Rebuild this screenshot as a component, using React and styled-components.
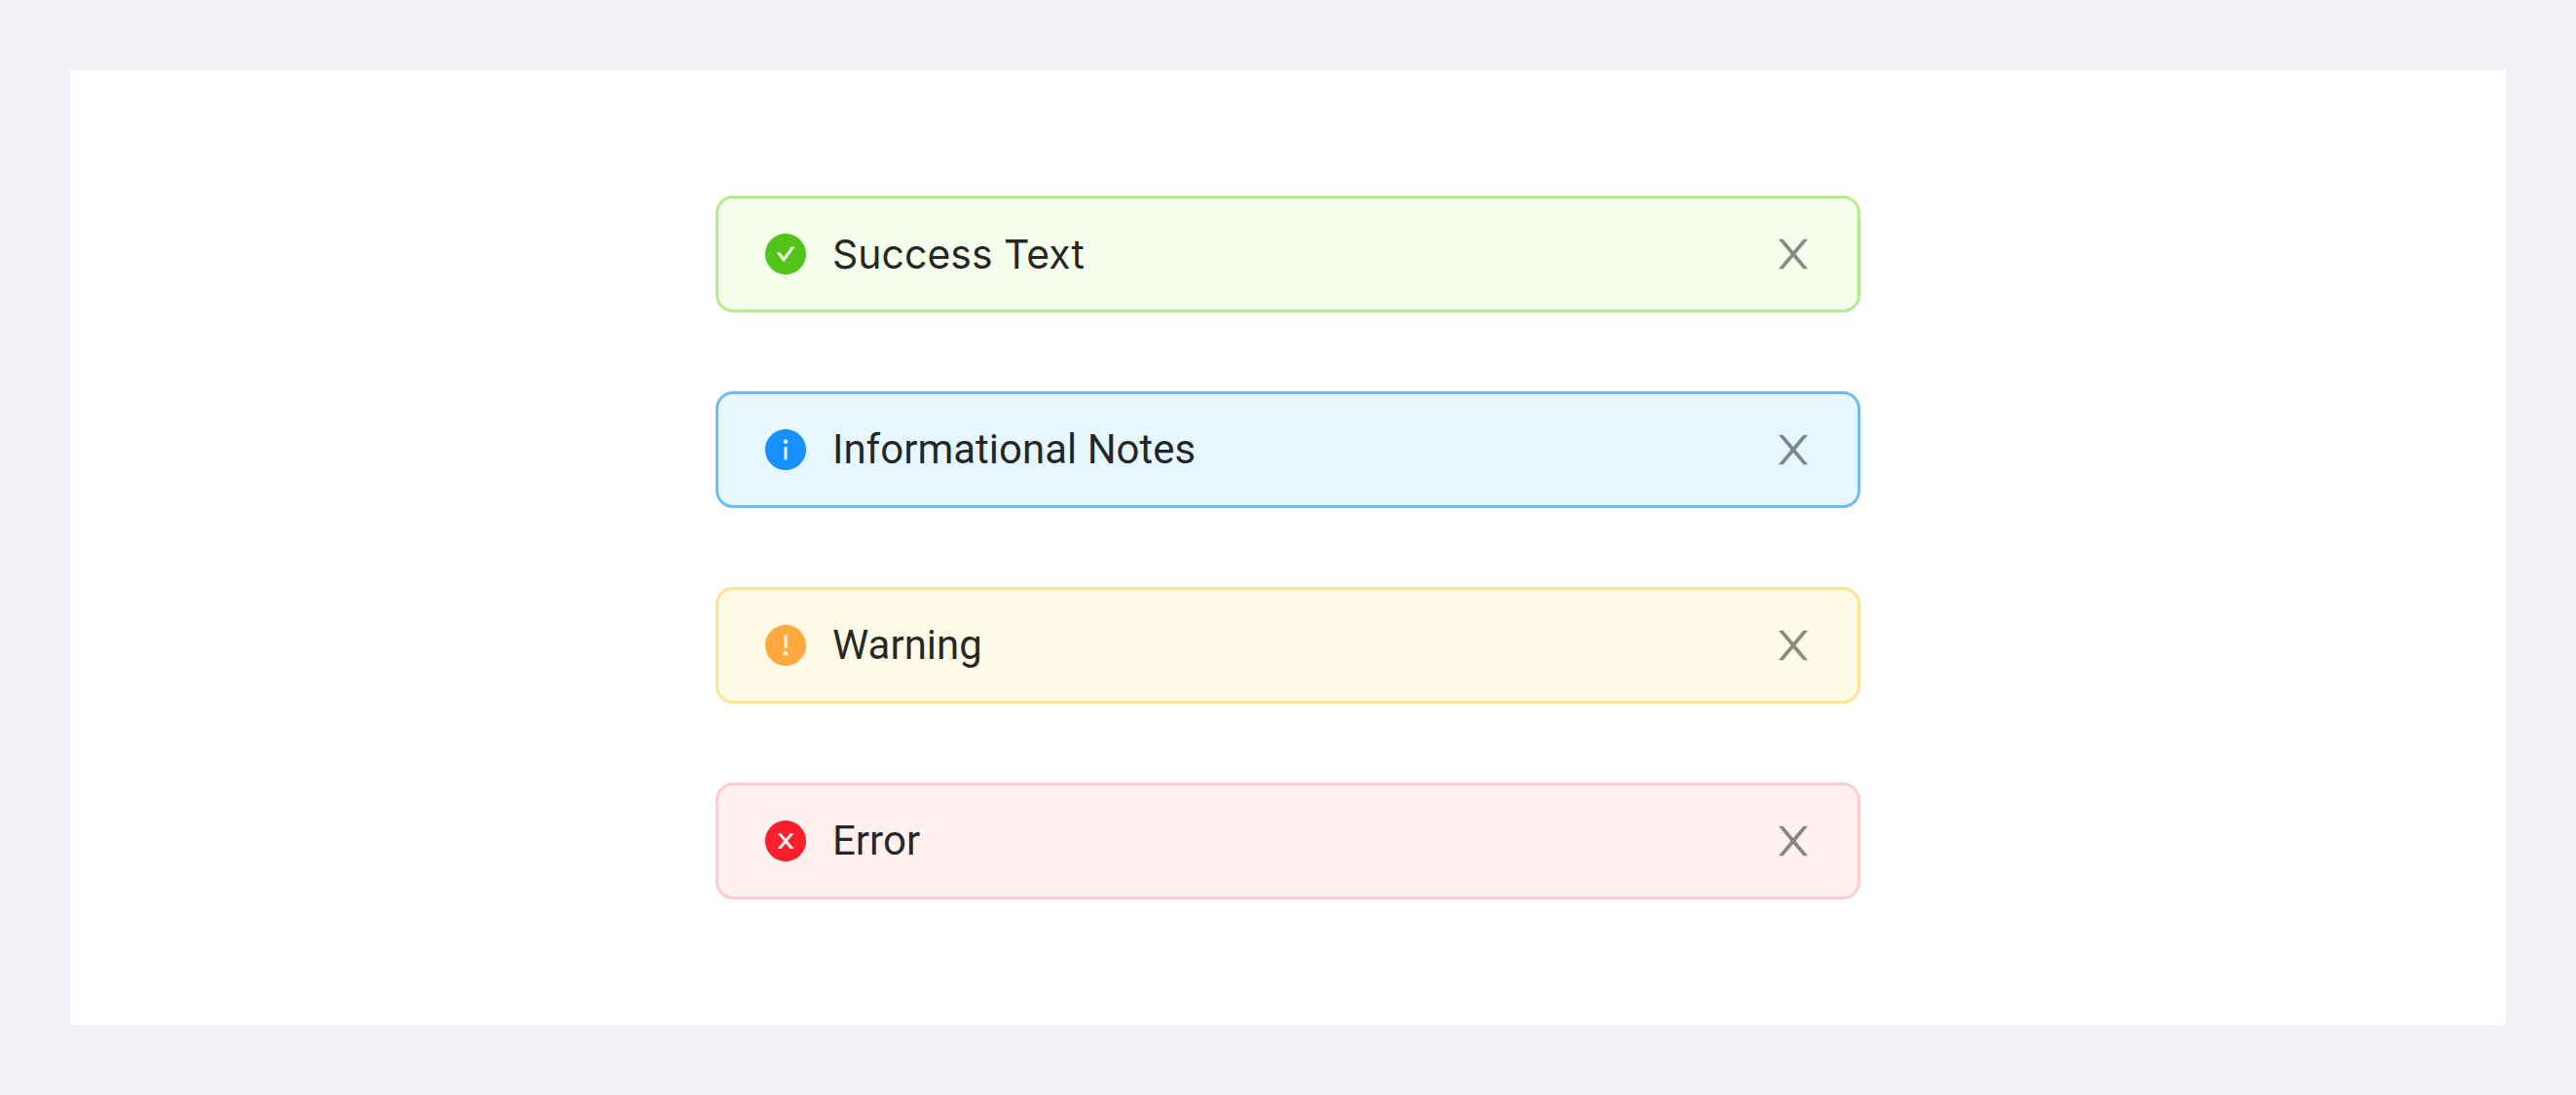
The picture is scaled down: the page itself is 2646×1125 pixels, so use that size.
import React, { useState } from "react";
import styled, { createGlobalStyle } from "styled-components";

const GlobalStyle = createGlobalStyle`
  *, *::before, *::after { box-sizing: border-box; }
  body {
    margin: 0;
    background: #f0f2f8;
    font-family: Roboto, "Noto Sans", sans-serif;
  }
`;

const Page = styled.div`
  min-height: 100vh;
  padding: 72px;
`;

const Panel = styled.main`
  display: flex;
  flex-direction: column;
  align-items: center;
  gap: 81px;
  padding: 129px 72px;
  background: #ffffff;
`;

const AlertBox = styled.div`
  display: flex;
  align-items: center;
  gap: 27px;
  width: 100%;
  max-width: 1176px;
  padding: 30px 48px;
  border: 3px solid ${(p) => p.$border};
  border-radius: 18px;
  background: ${(p) => p.$background};
`;

const StatusIcon = styled.svg`
  flex: none;
  width: 42px;
  height: 42px;
  fill: ${(p) => p.$color};
`;

const Message = styled.span`
  flex: 1;
  font-family: ${(p) => p.$font};
  font-size: ${(p) => p.$size}px;
  line-height: 54px;
  color: rgba(0, 0, 0, 0.85);
`;

const CloseButton = styled.button`
  display: flex;
  flex: none;
  padding: 0;
  border: 0;
  background: none;
  color: rgba(0, 0, 0, 0.45);
  cursor: pointer;

  &:hover { color: rgba(0, 0, 0, 0.75); }
`;

const CloseGlyph = styled.svg`
  width: 36px;
  height: 36px;
  fill: currentColor;
`;

const DISC =
  "M512 64C264.6 64 64 264.6 64 512s200.6 448 448 448 448-200.6 448-448S759.4 64 512 64z";

const ALERTS = [
  {
    id: "success",
    text: "Success Text",
    font: "Inter, sans-serif",
    size: 41,
    background: "#f6ffed",
    border: "#b7eb8f",
    color: "#52c41a",
    mark: "m193.5 301.7l-210.6 292a31.8 31.8 0 0 1-51.7 0L318.5 484.9c-3.8-5.3 0-12.7 6.5-12.7h46.9c10.2 0 19.9 4.9 25.9 13.3l71.2 98.8 157.2-218c6-8.3 15.6-13.3 25.9-13.3H699c6.5 0 10.3 7.4 6.5 12.7z",
  },
  {
    id: "info",
    text: "Informational Notes",
    background: "#e6f7ff",
    border: "#6fbcf5",
    color: "#1890ff",
    mark: "m32 664c0 4.4-3.6 8-8 8h-48c-4.4 0-8-3.6-8-8V456c0-4.4 3.6-8 8-8h48c4.4 0 8 3.6 8 8v272zm-32-344a48.01 48.01 0 0 1 0-96 48.01 48.01 0 0 1 0 96z",
  },
  {
    id: "warning",
    text: "Warning",
    background: "#fffae6",
    border: "#fbe493",
    color: "#ffa940",
    mark: "m-32 232c0-4.4 3.6-8 8-8h48c4.4 0 8 3.6 8 8v272c0 4.4-3.6 8-8 8h-48c-4.4 0-8-3.6-8-8V296zm32 440a48.01 48.01 0 0 1 0-96 48.01 48.01 0 0 1 0 96z",
  },
  {
    id: "error",
    text: "Error",
    background: "#fff1f0",
    border: "#fdcccb",
    color: "#f8202d",
    mark: "m165.4 618.2l-66-.3L512 563.4l-99.3 118.4-66.1.3c-4.4 0-8-3.5-8-8 0-1.9.7-3.7 1.9-5.2l130.1-155L340.5 359a8.32 8.32 0 0 1-1.9-5.2c0-4.4 3.6-8 8-8l66.1.3L512 464.6l99.3-118.4 66-.3c4.4 0 8 3.5 8 8 0 1.9-.7 3.7-1.9 5.2L553.5 514l130 155c1.2 1.5 1.9 3.3 1.9 5.2 0 4.4-3.6 8-8 8z",
  },
];

function Alert({ alert, onClose }) {
  return (
    <AlertBox role="alert" $background={alert.background} $border={alert.border}>
      <StatusIcon $color={alert.color} viewBox="64 64 896 896" aria-hidden="true">
        <path fillRule="evenodd" d={DISC + alert.mark} />
      </StatusIcon>
      <Message $font={alert.font || "inherit"} $size={alert.size || 42}>
        {alert.text}
      </Message>
      <CloseButton type="button" aria-label="Close" onClick={onClose}>
        <CloseGlyph viewBox="128 128 768 768" aria-hidden="true">
          <path d="M563.8 512l262.5-312.9c4.4-5.2.7-13.1-6.1-13.1h-79.8c-4.7 0-9.2 2.1-12.3 5.7L511.6 449.8 295.1 191.7c-3-3.6-7.5-5.7-12.3-5.7H203c-6.8 0-10.5 7.9-6.1 13.1L459.4 512 196.9 824.9A7.95 7.95 0 0 0 203 838h79.8c4.7 0 9.2-2.1 12.3-5.7l216.5-258.1 216.5 258.1c3 3.6 7.5 5.7 12.3 5.7h79.8c6.8 0 10.5-7.9 6.1-13.1L563.8 512z" />
        </CloseGlyph>
      </CloseButton>
    </AlertBox>
  );
}

export default function App() {
  const [closed, setClosed] = useState([]);
  return (
    <>
      <GlobalStyle />
      <Page>
        <Panel>
          {ALERTS.filter((a) => !closed.includes(a.id)).map((a) => (
            <Alert key={a.id} alert={a} onClose={() => setClosed([...closed, a.id])} />
          ))}
        </Panel>
      </Page>
    </>
  );
}
